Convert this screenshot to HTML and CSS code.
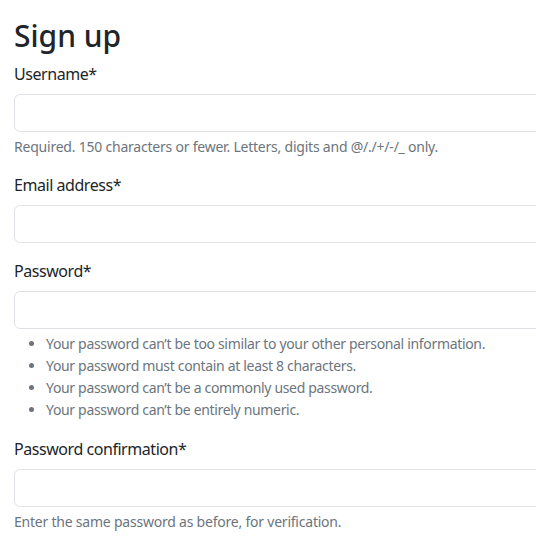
FILE: index.html
```html
<!DOCTYPE html>
<html lang="en">
<head>
<meta charset="utf-8">
<title>Sign up</title>
<link rel="stylesheet" href="styles.css">
</head>
<body>
<main class="container">
  <h1 class="title">Sign up</h1>
  <form class="signup">
    <div class="field">
      <label class="label" for="u">Username*</label>
      <input class="input" id="u" type="text">
      <div class="form-text">Required. 150 characters or fewer. Letters, digits and @/./+/-/_ only.</div>
    </div>
    <div class="field">
      <label class="label" for="e">Email address*</label>
      <input class="input" id="e" type="email">
    </div>
    <div class="field">
      <label class="label" for="p1">Password*</label>
      <input class="input" id="p1" type="password">
      <div class="form-text">
        <ul class="hints">
          <li>Your password can’t be too similar to your other personal information.</li>
          <li>Your password must contain at least 8 characters.</li>
          <li>Your password can’t be a commonly used password.</li>
          <li>Your password can’t be entirely numeric.</li>
        </ul>
      </div>
    </div>
    <div class="field">
      <label class="label" for="p2">Password confirmation*</label>
      <input class="input" id="p2" type="password">
      <div class="form-text">Enter the same password as before, for verification.</div>
    </div>
  </form>
</main>
</body>
</html>
```

FILE: styles.css
```css
html {
  overflow: hidden;
}
body {
  margin: 0;
  font-family: "Noto Sans", "DejaVu Sans", sans-serif;
  font-size: 16px;
  line-height: 1.5;
  color: #212529;
  background: #fff;
}
.container {
  width: 600px;
  padding: 18px 0 0 14px;
}
.title {
  margin: 0 0 8px;
  font-size: 30px;
  font-weight: 500;
  line-height: 1.2;
}
.field {
  margin-bottom: 16px;
}
.label {
  display: block;
  margin-bottom: 8px;
  letter-spacing: -0.45px;
}
.input {
  display: block;
  box-sizing: border-box;
  width: 100%;
  height: 38px;
  padding: 6px 12px;
  font: inherit;
  border: 1px solid #dee2e6;
  border-radius: 6px;
  background: #fff;
}
.form-text {
  margin-top: 4px;
  font-size: 14px;
  line-height: 21px;
  color: #6c757d;
  letter-spacing: -0.22px;
}
.hints {
  margin: 0;
  padding-left: 32px;
  letter-spacing: -0.33px;
}
.hints li {
  line-height: 22px;
}
```
